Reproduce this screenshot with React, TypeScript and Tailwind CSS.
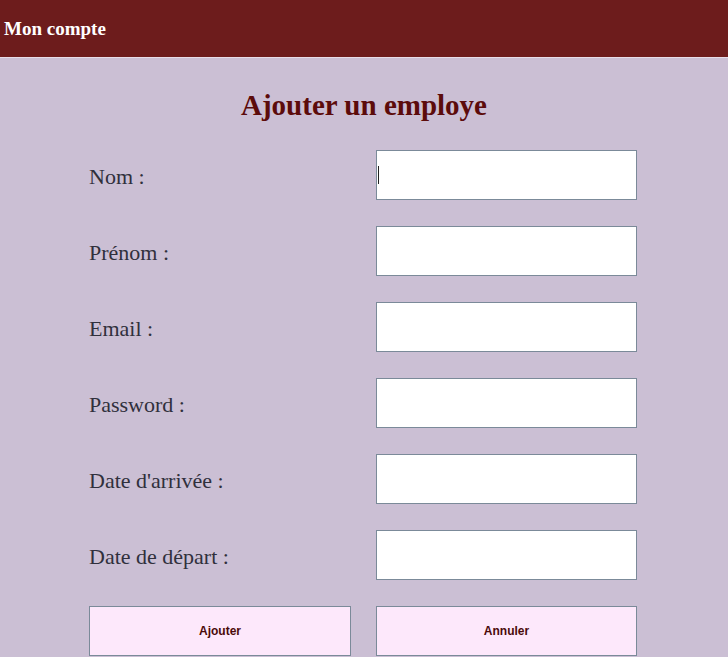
const fields = [
  { label: 'Nom :', type: 'text', name: 'nom' },
  { label: 'Prénom :', type: 'text', name: 'prenom' },
  { label: 'Email :', type: 'email', name: 'email' },
  { label: 'Password :', type: 'password', name: 'password' },
  { label: "Date d'arrivée :", type: 'text', name: 'arrivee' },
  { label: 'Date de départ :', type: 'text', name: 'depart' },
]

export default function App() {
  return <div className="min-h-[657px] bg-[#cbbfd4] font-['Liberation_Serif',serif]">

    <div className="h-[58px] bg-[#6d1c1c] border-b border-[#e8dde8] flex items-center px-1">
      <span className="text-white font-bold text-[19px] leading-none">Mon compte</span>
    </div>

    <h1 className="text-center text-[29px] font-bold text-[#5c0b0b] leading-none mt-[33px]">Ajouter un employe</h1>

    <div className="ml-[89px] mt-[30px] w-[548px] grid grid-cols-[287px_261px] gap-y-[26px]">
      {fields.map((f, i) => <div key={f.name} className="contents">
        <label htmlFor={f.name} className="h-[50px] flex items-center text-[22px] text-[#30303c] pt-[2px]">{f.label}</label>
        <div className="relative h-[50px]">
          <input id={f.name} name={f.name} type={f.type}
            className="w-full h-full bg-white border border-[#7b8a99] outline-none" />
          {i === 0 && <span className="absolute left-[2px] top-[16px] w-px h-[18px] bg-[#222]"></span>}
        </div>
      </div>)}

      <div className="pr-[25px]">
        <button className="w-full h-[50px] bg-[#fde8fb] border border-[#7b8a99] font-['Liberation_Sans',sans-serif] font-bold text-[12px] text-[#4a0a0a]">Ajouter</button>
      </div>
      <div>
        <button className="w-full h-[50px] bg-[#fde8fb] border border-[#7b8a99] font-['Liberation_Sans',sans-serif] font-bold text-[12px] text-[#4a0a0a]">Annuler</button>
      </div>
    </div>
  </div>
}
